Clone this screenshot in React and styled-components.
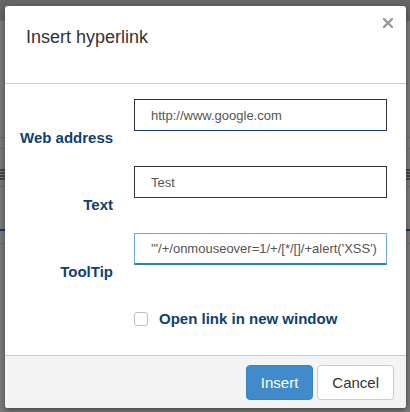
import React from "react";
import styled, { createGlobalStyle } from "styled-components";

const GlobalStyle = createGlobalStyle`
  html, body {
    margin: 0;
    padding: 0;
    background: #7b7b7b;
    font-family: "Liberation Sans", Arial, sans-serif;
  }
`;

// Dimmed page behind the dialog
const StyledPage = styled.div`
  position: relative;
  width: 410px;
  height: 412px;
  overflow: hidden;
  display: flex;
  flex-direction: column;
`;

const StyledTopBar = styled.div`
  height: 21px;
  background: #666666;
`;

const StyledRule = styled.div`
  height: ${(p) => p.size || 1}px;
  margin-top: ${(p) => p.offset}px;
  background: ${(p) => p.color || "#6c6c6c"};
`;

// Dialog
const StyledDialog = styled.div`
  position: absolute;
  left: 5px;
  top: 6px;
  width: 401px;
  background: #ffffff;
  border-radius: 3px;
  box-shadow: 0 2px 6px rgba(0, 0, 0, 0.45);
  display: flex;
  flex-direction: column;
  overflow: hidden;
`;

const StyledHeader = styled.div`
  height: 78px;
  box-sizing: border-box;
  padding: 12px 13px 0 21px;
  display: flex;
  justify-content: space-between;
  align-items: flex-start;
  border-bottom: 1px solid #cccccc;
`;

const StyledTitle = styled.h4`
  margin: 8px 0 0;
  font-size: 18px;
  font-weight: normal;
  line-height: 22px;
  color: #333333;
`;

const StyledClose = styled.button`
  border: 0;
  background: none;
  padding: 0;
  width: 10px;
  height: 10px;
  margin-top: 0;
  cursor: pointer;
  display: flex;
`;

const StyledBody = styled.div`
  padding: 15px 0 27px 15px;
  border-bottom: 1px solid #cccccc;
`;

const StyledRow = styled.div`
  display: grid;
  grid-template-columns: 93px 253px;
  column-gap: 21px;
  height: ${(p) => p.height || 67}px;
  align-items: start;
`;

const StyledLabel = styled.label`
  margin-top: 30px;
  text-align: right;
  font-size: 15px;
  line-height: 18px;
  font-weight: bold;
  color: #0f3f70;
  white-space: nowrap;
`;

const StyledInput = styled.input`
  box-sizing: border-box;
  width: 253px;
  height: 32px;
  margin: 0;
  padding: 0 4px 0 16px;
  font-family: "Liberation Sans", Arial, sans-serif;
  font-size: 13px;
  color: #555555;
  background: #ffffff;
  border: 1px solid ${(p) => (p.focused ? "#6aa9dc" : "#333333")};
  border-bottom: ${(p) => (p.focused ? "2px solid #2b82c6" : "1px solid #0f3f70")};
  border-radius: 0;
  outline: none;
`;

const StyledCheckRow = styled.label`
  grid-column: 2;
  display: flex;
  align-items: center;
  gap: 11px;
  margin-top: 10px;
  font-size: 15px;
  line-height: 18px;
  font-weight: bold;
  color: #0f3f70;
  white-space: nowrap;
`;

const StyledCheckbox = styled.span`
  box-sizing: border-box;
  width: 14px;
  height: 14px;
  border: 1px solid #bdbdbd;
  border-radius: 3px;
  background: #ffffff;
`;

const StyledFooter = styled.div`
  height: 52px;
  box-sizing: border-box;
  padding: 9px 12px 0;
  background: #f4f4f4;
  display: flex;
  justify-content: flex-end;
  align-items: flex-start;
  gap: 4px;
`;

const StyledButton = styled.button`
  box-sizing: border-box;
  height: 35px;
  padding: 0 14px;
  font-family: "Liberation Sans", Arial, sans-serif;
  font-size: 15px;
  border-radius: 4px;
  border: 1px solid ${(p) => (p.primary ? "#3a83c3" : "#cccccc")};
  background: ${(p) => (p.primary ? "#428bca" : "#ffffff")};
  color: ${(p) => (p.primary ? "#ffffff" : "#333333")};
  cursor: pointer;
`;

export default function App() {
  return (
    <>
      <GlobalStyle />
      <StyledPage>
        <StyledTopBar />
        <StyledRule offset={116} />
        <StyledRule offset={10} />
        <StyledRule offset={20} size={2} color="#474747" />
        <StyledRule offset={1} size={2} color="#474747" />
        <StyledRule offset={1} size={2} color="#474747" />
        <StyledRule offset={1} size={2} color="#474747" />
        <StyledRule offset={6} />
        <StyledRule offset={42} size={2} color="#173a63" />
        <StyledRule offset={12} />

        <StyledDialog>
          <StyledHeader>
            <StyledTitle>Insert hyperlink</StyledTitle>
            <StyledClose aria-label="Close">
              <svg width="10" height="10" viewBox="0 0 10 10">
                <path
                  d="M1 1 L9 9 M9 1 L1 9"
                  stroke="#9a9a9a"
                  strokeWidth="2.4"
                  strokeLinecap="square"
                />
              </svg>
            </StyledClose>
          </StyledHeader>

          <StyledBody>
            <StyledRow>
              <StyledLabel>Web address</StyledLabel>
              <StyledInput defaultValue="http://www.google.com" />
            </StyledRow>
            <StyledRow>
              <StyledLabel>Text</StyledLabel>
              <StyledInput defaultValue="Test" />
            </StyledRow>
            <StyledRow>
              <StyledLabel>ToolTip</StyledLabel>
              <StyledInput
                focused
                defaultValue={`'"/+/onmouseover=1/+/[*/[]/+alert('XSS')`}
              />
            </StyledRow>
            <StyledRow height={28}>
              <StyledCheckRow>
                <StyledCheckbox />
                Open link in new window
              </StyledCheckRow>
            </StyledRow>
          </StyledBody>

          <StyledFooter>
            <StyledButton primary>Insert</StyledButton>
            <StyledButton>Cancel</StyledButton>
          </StyledFooter>
        </StyledDialog>
      </StyledPage>
    </>
  );
}
